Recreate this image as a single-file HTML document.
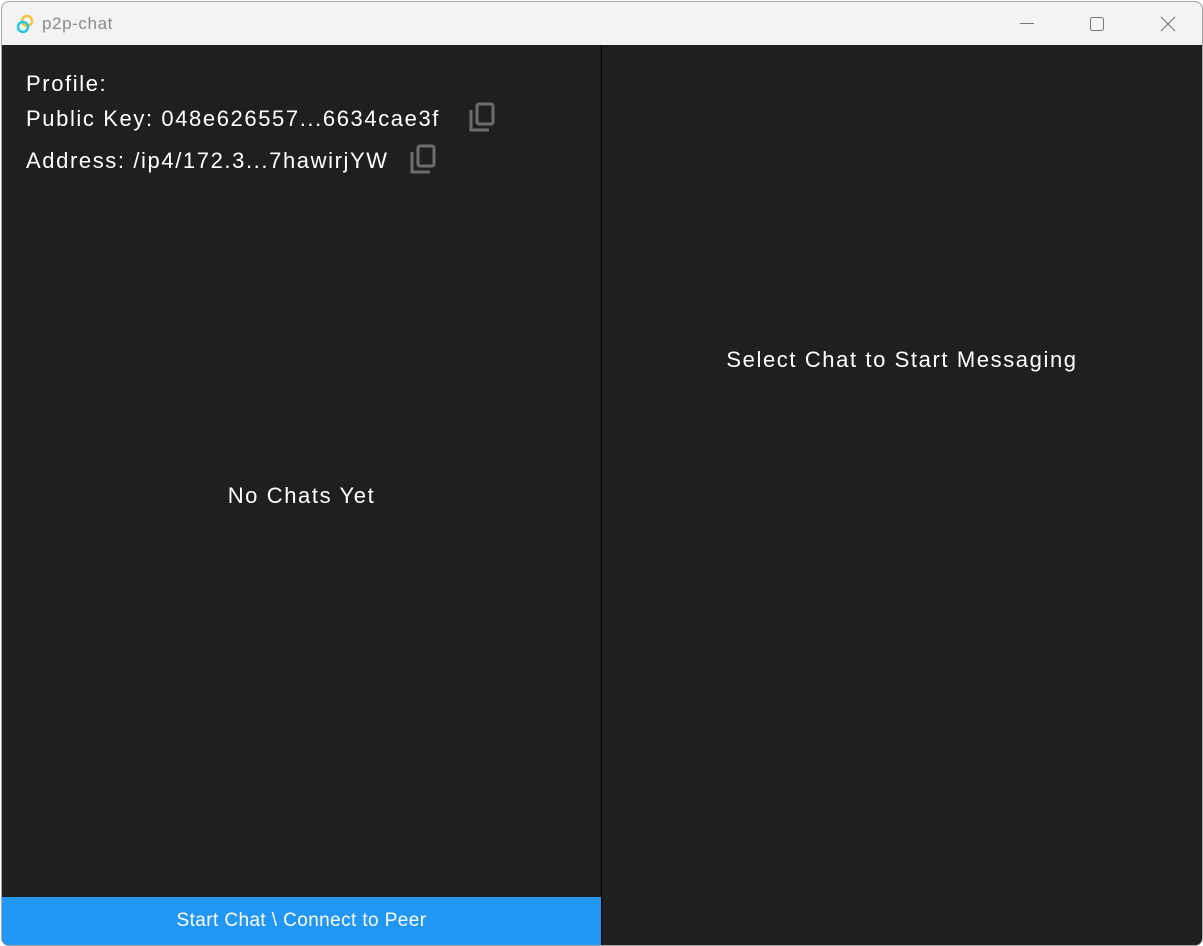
<!DOCTYPE html>
<html><head><style>
html,body{margin:0;padding:0;width:1203px;height:946px;overflow:hidden;background:#fff;font-family:"Liberation Sans",sans-serif}
.win{position:absolute;left:1px;top:1px;width:1200px;height:943px;border:1px solid #a8a8a8;border-radius:8px;overflow:hidden;background:#1f1f1f}
.tb{position:absolute;left:0;top:0;width:1200px;height:43px;background:#f3f3f3}
.title{position:absolute;left:40px;top:12px;font-size:17px;color:#8a8a8a;letter-spacing:0.6px}
.left{position:absolute;left:0;top:43px;width:599px;height:900px;background:#1f1f1f;border-right:1px solid #000}
.right{position:absolute;left:600px;top:43px;width:600px;height:900px;background:#1f1f1f}
.t{position:absolute;color:#fff;font-size:22px;white-space:nowrap;letter-spacing:1.6px}
.btn{position:absolute;left:0;bottom:0;width:599px;height:48px;background:#2196f3;color:#fff;font-size:19px;text-align:center;line-height:48px;letter-spacing:0.4px}
.cp{position:absolute}
</style></head><body>
<div class="win">
<div class="tb">
<svg style="position:absolute;left:14px;top:12px" width="18" height="20" viewBox="0 0 18 20"><circle cx="11" cy="7" r="5" fill="none" stroke="#f8c33c" stroke-width="2.5"/><circle cx="7" cy="13" r="5" fill="none" stroke="#24c8db" stroke-width="2.5"/></svg>
<div class="title">p2p-chat</div>
<svg style="position:absolute;left:1018px;top:21px" width="14" height="2"><rect width="14" height="1" fill="#777"/></svg>
<svg style="position:absolute;left:1088px;top:15px" width="14" height="14"><rect x="0.5" y="0.5" width="13" height="13" rx="2" fill="none" stroke="#777"/></svg>
<svg style="position:absolute;left:1158px;top:14px" width="16" height="16"><path d="M1 1L15 15M15 1L1 15" stroke="#777" stroke-width="1.2"/></svg>
</div>
<div class="left">
<div class="t" style="left:24px;top:26px">Profile:</div>
<div class="t" style="left:24px;top:61px">Public Key: 048e626557...6634cae3f</div>
<svg class="cp" style="left:466px;top:57px" width="28" height="32" viewBox="0 0 28 32"><path d="M3 8v20h18" fill="none" stroke="#6c6c6c" stroke-width="3"/><rect x="9" y="2" width="16" height="20" rx="2" fill="none" stroke="#6c6c6c" stroke-width="3"/></svg>
<div class="t" style="left:24px;top:103px">Address: /ip4/172.3...7hawirjYW</div>
<svg class="cp" style="left:407px;top:99px" width="28" height="32" viewBox="0 0 28 32"><path d="M3 8v20h18" fill="none" stroke="#6c6c6c" stroke-width="3"/><rect x="9" y="2" width="16" height="20" rx="2" fill="none" stroke="#6c6c6c" stroke-width="3"/></svg>
<div class="t" style="left:0;width:599px;text-align:center;top:438px">No Chats Yet</div>
<div class="btn">Start Chat \ Connect to Peer</div>
</div>
<div class="right">
<div class="t" style="left:0;width:600px;text-align:center;top:302px">Select Chat to Start Messaging</div>
</div>
</div>
</body></html>
